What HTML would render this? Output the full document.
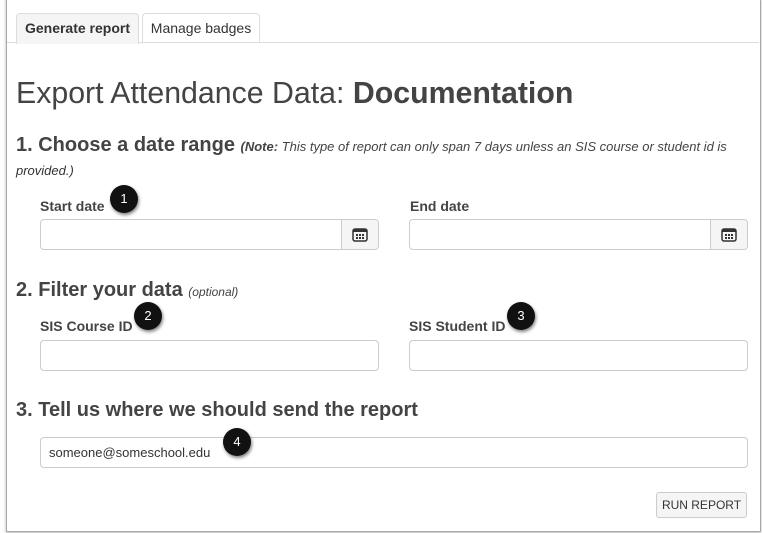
<!DOCTYPE html>
<html><head><style>
body{margin:0;width:762px;height:533px;background:#fff;font-family:"Liberation Sans",Arial,sans-serif;color:#333;position:relative;overflow:hidden}
.a{position:absolute}
.frame{left:6px;top:-2px;width:753px;height:532px;border:1px solid #a8a8a8;box-shadow:0 1px 3px rgba(0,0,0,.3)}
.tab{top:13px;height:29px;border:1px solid #ddd;border-bottom:none;border-radius:4px 4px 0 0;font-size:14px;line-height:29px;text-align:center}
.inp{border:1px solid #ccc;border-radius:4px;background:#fff;height:31px;box-sizing:border-box}
.lbl{font-size:14px;font-weight:bold;color:#444}
.h2{font-size:20px;font-weight:bold;color:#444}
.it{font-style:italic;font-weight:normal;font-size:13px}
.cal{position:absolute;right:0;top:0;width:36px;height:29px;border-left:1px solid #ccc;background:#f5f5f5;border-radius:0 4px 4px 0}
.badge{width:28px;height:28px;border-radius:50%;background:#111;color:#fff;font-size:13px;text-align:center;line-height:28px;box-shadow:1px 2px 3px rgba(0,0,0,.5)}
</style></head><body>
<div class="a frame"></div>
<div class="a" style="left:7px;top:42px;width:752px;border-top:1px solid #ddd"></div>
<div class="a tab" style="left:16px;width:121px;background:#f5f5f5;font-weight:bold;height:30px">Generate report</div>
<div class="a tab" style="left:142px;width:116px">Manage badges</div>
<div class="a" style="left:16px;top:77px;font-size:30.3px;color:#444">Export Attendance Data: <b>Documentation</b></div>
<div class="a h2" style="left:16px;top:131px;width:745px;line-height:28px;white-space:nowrap">1. Choose a date range <span class="it"><b>(Note:</b> This type of report can only span 7 days unless an SIS course or student id is</span></div>
<div class="a it" style="left:16px;top:163px">provided.)</div>
<div class="a lbl" style="left:40px;top:198px">Start date</div>
<div class="a lbl" style="left:410px;top:198px">End date</div>
<div class="a inp" style="left:40px;top:219px;width:339px"><div class="cal"><svg width="36" height="29"><rect x="11" y="9" width="14" height="12" rx="2" fill="none" stroke="#333" stroke-width="1.5"/><rect x="11" y="9" width="14" height="3" fill="#333"/><g fill="#333"><rect x="14" y="14" width="2" height="2"/><rect x="17" y="14" width="2" height="2"/><rect x="20" y="14" width="2" height="2"/><rect x="14" y="17" width="2" height="2"/><rect x="17" y="17" width="2" height="2"/><rect x="20" y="17" width="2" height="2"/></g></svg></div></div>
<div class="a inp" style="left:409px;top:219px;width:339px"><div class="cal"><svg width="36" height="29"><rect x="11" y="9" width="14" height="12" rx="2" fill="none" stroke="#333" stroke-width="1.5"/><rect x="11" y="9" width="14" height="3" fill="#333"/><g fill="#333"><rect x="14" y="14" width="2" height="2"/><rect x="17" y="14" width="2" height="2"/><rect x="20" y="14" width="2" height="2"/><rect x="14" y="17" width="2" height="2"/><rect x="17" y="17" width="2" height="2"/><rect x="20" y="17" width="2" height="2"/></g></svg></div></div>
<div class="a h2" style="left:16px;top:279px">2. Filter your data <span class="it" style="font-size:12px">(optional)</span></div>
<div class="a lbl" style="left:40px;top:318px">SIS Course ID</div>
<div class="a lbl" style="left:409px;top:318px">SIS Student ID</div>
<div class="a inp" style="left:40px;top:340px;width:339px"></div>
<div class="a inp" style="left:409px;top:340px;width:339px"></div>
<div class="a h2" style="left:16px;top:399px">3. Tell us where we should send the report</div>
<div class="a inp" style="left:40px;top:437px;width:708px;font-size:13px;line-height:30px;padding-left:8px">someone@someschool.edu</div>
<div class="a" style="left:656px;top:492px;width:91px;height:26px;box-sizing:border-box;border:1px solid #ccc;border-radius:3px;background:#f5f5f5;font-size:12px;line-height:24px;text-align:center;color:#333">RUN REPORT</div>
<div class="a badge" style="left:110px;top:185px">1</div>
<div class="a badge" style="left:134px;top:302px">2</div>
<div class="a badge" style="left:507px;top:302px">3</div>
<div class="a badge" style="left:223px;top:428px">4</div>
</body></html>
